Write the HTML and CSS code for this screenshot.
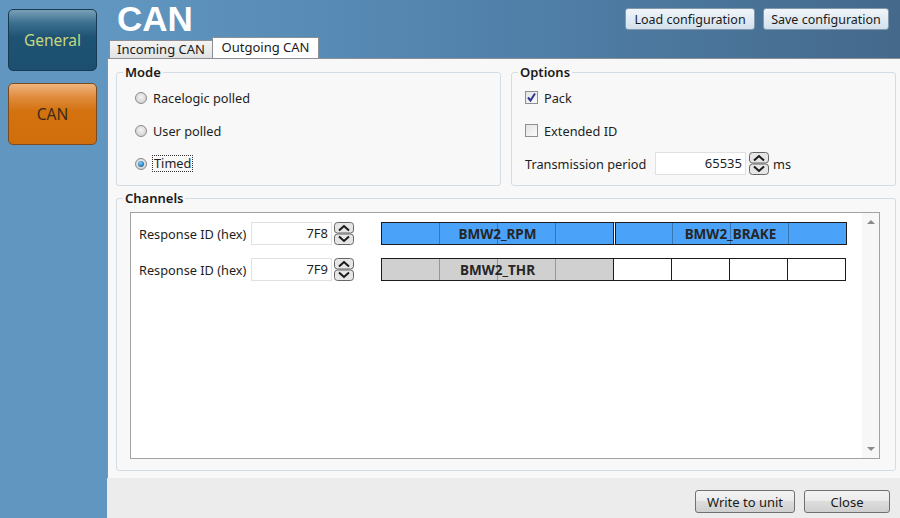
FILE: index.html
```html
<!DOCTYPE html>
<html lang="en">
<head>
    <meta charset="UTF-8">
    <title>CAN</title>
    <link rel="stylesheet" href="styles.css">
</head>
<body>
<div class="app">
    <!-- side navigation -->
    <nav class="sidebar">
        <button class="nav-btn nav-general">General</button>
        <button class="nav-btn nav-can">CAN</button>
    </nav>

    <main class="main">
        <header class="header">
            <div class="header-left">
                <h1 class="title">CAN</h1>
                <div class="tabs">
                    <div class="tab tab-in">Incoming CAN</div>
                    <div class="tab tab-out active">Outgoing CAN</div>
                </div>
            </div>
            <div class="header-actions">
                <button class="btn btn-blue btn-load">Load configuration</button>
                <button class="btn btn-blue btn-save">Save configuration</button>
            </div>
        </header>

        <section class="panel">
            <div class="top-row">
                <fieldset class="group group-mode">
                    <legend>Mode</legend>
                    <div class="opt"><span class="radio"></span>Racelogic polled</div>
                    <div class="opt"><span class="radio"></span>User polled</div>
                    <div class="opt"><span class="radio checked"></span><span class="focus">Timed</span></div>
                </fieldset>

                <fieldset class="group group-options">
                    <legend>Options</legend>
                    <div class="opt">
                        <span class="check checked">
                            <svg width="11" height="11" viewBox="0 0 11 11" fill="none" stroke="#2f3590" stroke-width="2">
                                <path d="M2 5.5l2.5 3L9 1.5"/>
                            </svg>
                        </span>Pack
                    </div>
                    <div class="opt"><span class="check"></span>Extended ID</div>
                    <div class="opt">
                        <span class="period-label">Transmission period</span>
                        <span class="num-input period-input">65535</span>
                        <svg class="spinner" width="20" height="23" viewBox="0 0 20 23">
                            <rect x="0.5" y="0.5" width="19" height="10.5" rx="3" fill="#e6e6e6" stroke="#666"/>
                            <rect x="0.5" y="12" width="19" height="10.5" rx="3" fill="#e6e6e6" stroke="#666"/>
                            <path d="M5 8.5L10 4l5 4.5M5 14.5l5 4.5 5-4.5" fill="none" stroke="#1a1a1a" stroke-width="2"/>
                        </svg>
                        <span class="unit">ms</span>
                    </div>
                </fieldset>
            </div>

            <fieldset class="group channels">
                <legend>Channels</legend>
                <div class="listbox">
                    <div class="list-rows">
                        <div class="chan-row">
                            <span class="chan-label">Response ID (hex)</span>
                            <span class="num-input id-input">7F8</span>
                            <svg class="spinner" width="20" height="23" viewBox="0 0 20 23">
                                <rect x="0.5" y="0.5" width="19" height="10.5" rx="3" fill="#e6e6e6" stroke="#666"/>
                                <rect x="0.5" y="12" width="19" height="10.5" rx="3" fill="#e6e6e6" stroke="#666"/>
                                <path d="M5 8.5L10 4l5 4.5M5 14.5l5 4.5 5-4.5" fill="none" stroke="#1a1a1a" stroke-width="2"/>
                            </svg>
                            <div class="bar">
                                <div class="sig sig-blue">BMW2_RPM</div>
                                <div class="sig sig-blue">BMW2_BRAKE</div>
                            </div>
                        </div>
                        <div class="chan-row">
                            <span class="chan-label">Response ID (hex)</span>
                            <span class="num-input id-input">7F9</span>
                            <svg class="spinner" width="20" height="23" viewBox="0 0 20 23">
                                <rect x="0.5" y="0.5" width="19" height="10.5" rx="3" fill="#e6e6e6" stroke="#666"/>
                                <rect x="0.5" y="12" width="19" height="10.5" rx="3" fill="#e6e6e6" stroke="#666"/>
                                <path d="M5 8.5L10 4l5 4.5M5 14.5l5 4.5 5-4.5" fill="none" stroke="#1a1a1a" stroke-width="2"/>
                            </svg>
                            <div class="bar">
                                <div class="sig sig-grey">BMW2_THR</div>
                                <div class="cell"></div>
                                <div class="cell"></div>
                                <div class="cell"></div>
                                <div class="cell"></div>
                            </div>
                        </div>
                    </div>
                    <div class="scrollbar">
                        <span class="arrow arrow-up"></span>
                        <span class="arrow arrow-down"></span>
                    </div>
                </div>
            </fieldset>
        </section>

        <footer class="footer">
            <button class="btn btn-grey btn-write">Write to unit</button>
            <button class="btn btn-grey btn-close">Close</button>
        </footer>
    </main>
</div>
</body>
</html>
```

FILE: styles.css
```css
:root {
    --text: #1e1e1e;
    --group-border: #d3dde3;
    --tab-border: #8b8f96;
    --sig-blue: #4aa3f8;
    --sig-grey: #d0d0d0;
}

html, body {
    margin: 0;
    width: 900px;
    height: 518px;
    overflow: hidden;
}

body {
    font-family: "Noto Sans", "Open Sans", sans-serif;
    font-size: 12.75px;
    color: var(--text);
}

.app {
    display: flex;
    height: 518px;
}

/* side navigation */
.sidebar {
    width: 107px;
    flex: none;
    box-sizing: border-box;
    padding: 9px 0 0 8px;
    background: #6096c0;
    display: flex;
    flex-direction: column;
    gap: 12px;
}

.nav-btn {
    width: 89px;
    height: 62px;
    border-radius: 5px;
    font-family: "Noto Sans", sans-serif;
    font-size: 15.5px;
    padding: 0;
}

.nav-general {
    background: linear-gradient(#7aa0b8 0%, #3a6f8e 22%, #1e5374 45%, #1c4f6f 100%);
    border: 1px solid #163a52;
    color: #c6d77d;
}

.nav-can {
    background: linear-gradient(#eeb57f 0%, #e08b3c 22%, #d3720f 45%, #d06e0b 100%);
    border: 1px solid #7a4a1e;
    color: #3b2a17;
}

.main {
    flex: 1;
    display: flex;
    flex-direction: column;
    min-width: 0;
}

/* header with title, tabs and config buttons */
.header {
    height: 58px;
    flex: none;
    display: flex;
    justify-content: space-between;
    background: linear-gradient(90deg, #6096c0 0%, #5283ad 45%, #44698b 100%);
}

.header-left {
    display: flex;
    flex-direction: column;
    justify-content: flex-end;
}

.title {
    margin: 0 0 0 10px;
    font: bold 35px/37px "Liberation Sans", Arial, sans-serif;
    color: #fff;
}

.tabs {
    display: flex;
    align-items: flex-end;
    height: 21px;
    margin-left: 2px;
}

.tab {
    box-sizing: border-box;
    height: 18px;
    border: 1px solid var(--tab-border);
    border-bottom: none;
    background: linear-gradient(#f4f4f4, #e2e2e2);
    font-size: 13px;
    line-height: 17px;
    text-align: center;
    color: #1a1a1a;
}

.tab-in {
    width: 104px;
}

.tab-out {
    width: 107px;
    margin-left: -1px;
}

.tab.active {
    height: 21px;
    line-height: 19px;
    background: #fff;
}

.header-actions {
    display: flex;
    align-items: flex-start;
    gap: 8px;
    padding: 8px 11px 0 0;
}

.btn {
    height: 22px;
    padding: 0;
    font-family: "Noto Sans", sans-serif;
    font-size: 12.5px;
    color: #1a1a1a;
    border-radius: 3px;
    cursor: pointer;
}

.btn-blue {
    border: 1px solid #8299ae;
    background: linear-gradient(#f0f5fa 0%, #e2ebf3 50%, #d3e0ec 100%);
}

.btn-load { width: 130px; }
.btn-save { width: 126px; }

/* tab content */
.panel {
    flex: 1;
    box-sizing: border-box;
    background: #f8f8f8;
    border-top: 1px solid var(--tab-border);
    border-left: 1px solid var(--tab-border);
    padding: 5px 4px 7px 8px;
    display: flex;
    flex-direction: column;
    gap: 4px;
}

.top-row {
    display: grid;
    grid-template-columns: 1fr 1fr;
    gap: 10px;
}

.group {
    margin: 0;
    min-width: 0;
    border: 1px solid var(--group-border);
    border-radius: 3px;
    padding: 1px 0 5px 0;
}

.group legend {
    margin-left: 6px;
    padding: 0 2px;
    font-size: 13px;
    line-height: 16px;
    font-weight: 600;
    color: #1a1a1a;
}

.group-mode .opt {
    padding-left: 18px;
}

.group-options .opt {
    padding-left: 13px;
}

.opt {
    display: flex;
    align-items: center;
    gap: 6px;
    height: 33px;
}

.radio {
    width: 12px;
    height: 12px;
    box-sizing: border-box;
    border-radius: 50%;
    border: 1px solid #8a8a8a;
    background: radial-gradient(circle at 50% 40%, #f4f4f4 0%, #d6d6d6 70%, #c4c4c4 100%);
    display: grid;
    place-items: center;
}

.radio.checked::after {
    content: "";
    width: 6px;
    height: 6px;
    border-radius: 50%;
    background: radial-gradient(circle at 40% 35%, #8fd0f5 0%, #2a86c4 55%, #155f93 100%);
}

.focus {
    outline: 1px dotted #333;
    outline-offset: 0;
    padding: 0 1px;
    line-height: 15px;
}

.check {
    width: 13px;
    height: 13px;
    box-sizing: border-box;
    border: 1px solid #8e8f8f;
    background: linear-gradient(135deg, #e4e4e4, #fafafa);
    display: grid;
    place-items: center;
}

.period-label {
    width: 124px;
}

.num-input {
    box-sizing: border-box;
    height: 23px;
    background: #fff;
    border: 1px solid #e1e1e1;
    text-align: right;
    padding-right: 3px;
    line-height: 21px;
    font-size: 13px;
}

.period-input {
    width: 91px;
}

.opt .spinner {
    margin-left: -3px;
}

.unit {
    margin-left: -2px;
}

/* channels list */
.channels {
    flex: 1;
    display: flex;
    flex-direction: column;
    padding: 6px 15px 11px 0;
}

.listbox {
    flex: 1;
    display: flex;
    margin-left: 13px;
    border: 1px solid #a2a2a2;
    background: #fff;
}

.list-rows {
    flex: 1;
    padding: 9px 0 0 8px;
    display: flex;
    flex-direction: column;
    gap: 13px;
}

.chan-row {
    display: flex;
    align-items: center;
    height: 23px;
}

.chan-label {
    width: 112px;
}

.id-input {
    width: 81px;
}

.chan-row .spinner {
    margin-left: 2px;
}

.bar {
    display: flex;
    margin-left: 27px;
    height: 23px;
}

.sig {
    box-sizing: border-box;
    width: 233px;
    border: 1px solid #1c1c1c;
    display: flex;
    align-items: center;
    justify-content: center;
    font-weight: bold;
    font-size: 13.5px;
    color: #262626;
    background-image: repeating-linear-gradient(90deg, transparent 0 57px, rgba(0, 0, 0, 0.28) 57px 58px);
}

.sig + .sig {
    border-left: 1px solid #fff;
    box-shadow: inset 1px 0 0 #1c1c1c;
}

.sig-blue {
    background-color: var(--sig-blue);
}

.sig-grey {
    background-color: var(--sig-grey);
}

.cell {
    box-sizing: border-box;
    width: 58px;
    border: 1px solid #1c1c1c;
    border-left: none;
    background: #fff;
}

.scrollbar {
    width: 17px;
    flex: none;
    background: #f7f7f7;
    display: flex;
    flex-direction: column;
    justify-content: space-between;
    align-items: center;
    padding: 7px 0;
}

.arrow {
    width: 0;
    height: 0;
    border-left: 4px solid transparent;
    border-right: 4px solid transparent;
}

.arrow-up {
    border-bottom: 4px solid #8a8a8a;
}

.arrow-down {
    border-top: 4px solid #8a8a8a;
}

/* bottom bar */
.footer {
    height: 40px;
    flex: none;
    box-sizing: border-box;
    background: #ececec;
    display: flex;
    justify-content: flex-end;
    align-items: flex-start;
    gap: 9px;
    padding: 12px 10px 0 0;
}

.btn-grey {
    height: 23px;
    font-size: 13px;
    border: 1px solid #707070;
    background: linear-gradient(#f3f3f3 0%, #ebebeb 50%, #dddddd 50%, #cfcfcf 100%);
}

.btn-write { width: 100px; }
.btn-close { width: 86px; }
```
